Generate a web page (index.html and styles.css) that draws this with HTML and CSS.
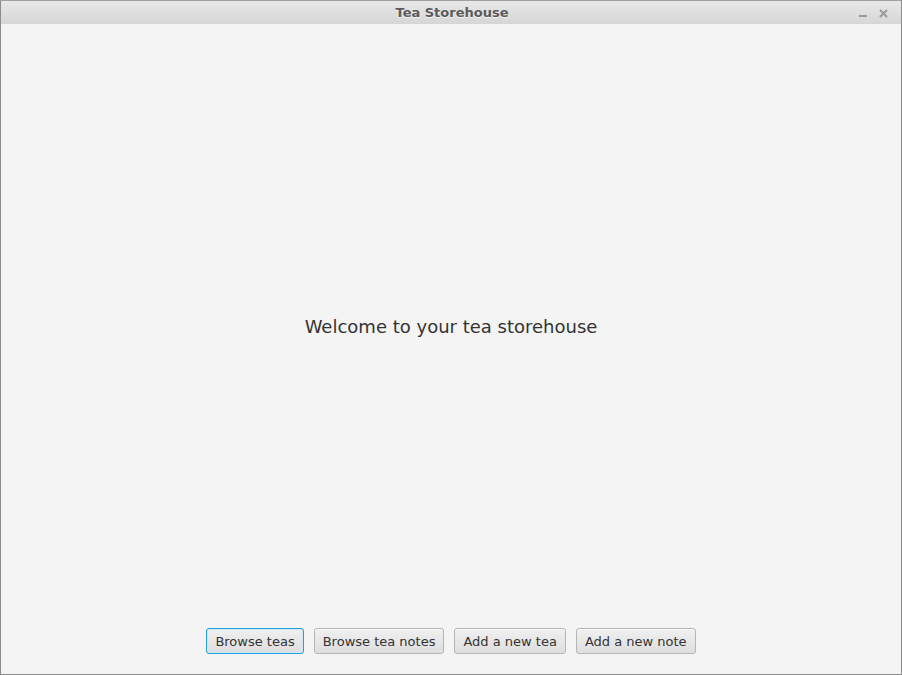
FILE: index.html
```html
<!DOCTYPE html>
<html>
<head>
<meta charset="utf-8">
<link rel="stylesheet" href="styles.css">
</head>
<body>
<div class="window">
  <div class="titlebar">
    <span class="title">Tea Storehouse</span>
    <div class="controls">
      <span class="ctl-min"></span>
      <svg class="ctl-close" width="9" height="9" viewBox="0 0 9 9"><path d="M1 1 L8 8 M8 1 L1 8" stroke="#9a9a9a" stroke-width="2"/></svg>
    </div>
  </div>
  <div class="main">
    <div class="welcome">Welcome to your tea storehouse</div>
  </div>
  <div class="buttons">
    <button class="btn focused">Browse teas</button>
    <button class="btn">Browse tea notes</button>
    <button class="btn">Add a new tea</button>
    <button class="btn">Add a new note</button>
  </div>
</div>
</body>
</html>
```
FILE: styles.css
```css
html, body {
  margin: 0;
  padding: 0;
  background: #f4f4f4;
}
.window {
  box-sizing: border-box;
  width: 902px;
  height: 675px;
  border: 1px solid #8c8c8c;
  border-top-color: #a0a0a0;
  display: flex;
  flex-direction: column;
  background: #f4f4f4;
  font-family: "DejaVu Sans", sans-serif;
}
.titlebar {
  height: 23px;
  flex: none;
  position: relative;
  background: linear-gradient(#e8e8e8, #d6d6d6);
  display: flex;
  align-items: center;
  justify-content: center;
}
.title {
  font-weight: bold;
  font-size: 13px;
  color: #5a5a5a;
  text-shadow: 0 1px 0 #f4f4f4;
  margin-left: 2px;
}
.controls {
  position: absolute;
  right: 13px;
  top: 8px;
  display: flex;
  align-items: center;
  gap: 12px;
}
.ctl-min {
  display: block;
  width: 8px;
  height: 2px;
  margin-top: 4px;
  background: #9a9a9a;
}
.ctl-close {
  display: block;
}
.main {
  flex: 1;
  display: flex;
  align-items: center;
  justify-content: center;
}
.welcome {
  font-size: 18px;
  color: #333333;
}
.buttons {
  flex: none;
  display: flex;
  justify-content: center;
  gap: 10px;
  padding-bottom: 20px;
}
.btn {
  box-sizing: border-box;
  height: 26px;
  padding: 0 8px;
  font-family: "DejaVu Sans", sans-serif;
  font-size: 13px;
  color: #333333;
  background: linear-gradient(#f0f0f0, #dedede);
  border: 1px solid #b5b5b5;
  border-radius: 3px;
  box-shadow: inset 0 1px 0 #fafafa;
}
.btn.focused {
  border-color: #1fa3da;
  box-shadow: inset 0 0 0 1px #cfe9f6;
}
```
